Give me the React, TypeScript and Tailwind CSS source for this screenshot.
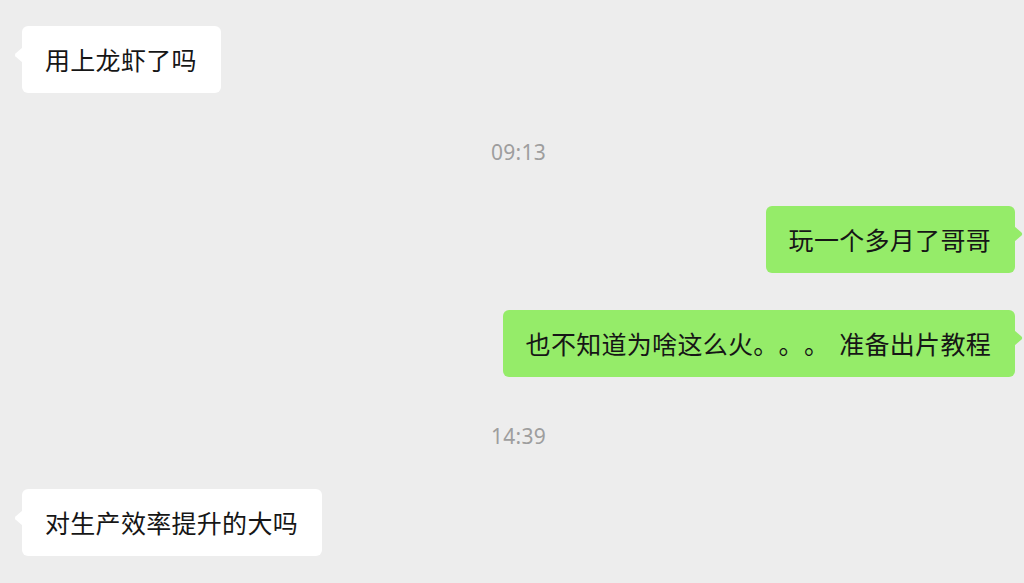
import React from "react";

const CJK = '"Noto Sans CJK SC", "Noto Sans", sans-serif';

function Bubble({ children, mine }: { children: React.ReactNode; mine?: boolean }) {
  return (
    <div className={mine ? "flex justify-end" : "flex justify-start"}>
      <div
        className={
          "relative rounded-[6px] pl-[23px] pr-[24px] py-4 text-[25px] leading-[35px] tracking-[0.3px] text-[#161616] whitespace-pre [text-spacing-trim:space-all] " +
          (mine ? "bg-[#95ec69]" : "bg-white")
        }
        style={{ fontFamily: CJK }}
      >
        {children}
        {mine ? (
          <svg className="absolute right-[-8px] top-[20px]" width="9" height="16" viewBox="0 0 9 16">
            <path d="M0 0 L7.5 6.6 Q8.8 8 7.5 9.4 L0 16 Z" fill="#95ec69" />
          </svg>
        ) : (
          <svg className="absolute left-[-8px] top-[21px]" width="9" height="16" viewBox="0 0 9 16">
            <path d="M9 0 L1.5 6.6 Q0.2 8 1.5 9.4 L9 16 Z" fill="#ffffff" />
          </svg>
        )}
      </div>
    </div>
  );
}

function Time({ t }: { t: string }) {
  return (
    <div
      className="flex justify-center text-[21px] leading-[28px] text-[#9e9e9e] tracking-[0.3px]"
      style={{ fontFamily: '"Noto Sans", "Liberation Sans", sans-serif' }}
    >
      {t}
    </div>
  );
}

export default function App() {
  return (
    <div className="w-[1024px] h-[583px] bg-[#ededed] overflow-hidden pt-[26px] pl-[22px] pr-[9px] flex flex-col">
      <Bubble>用上龙虾了吗</Bubble>
      <div className="mt-[45px]">
        <Time t="09:13" />
      </div>
      <div className="mt-[40px]">
        <Bubble mine>玩一个多月了哥哥</Bubble>
      </div>
      <div className="mt-[37px]">
        <Bubble mine>
          也不知道为啥这么火。。。<span className="inline-block w-[10px]"> </span>准备出片教程
        </Bubble>
      </div>
      <div className="mt-[45px]">
        <Time t="14:39" />
      </div>
      <div className="mt-[39px]">
        <Bubble>对生产效率提升的大吗</Bubble>
      </div>
    </div>
  );
}
